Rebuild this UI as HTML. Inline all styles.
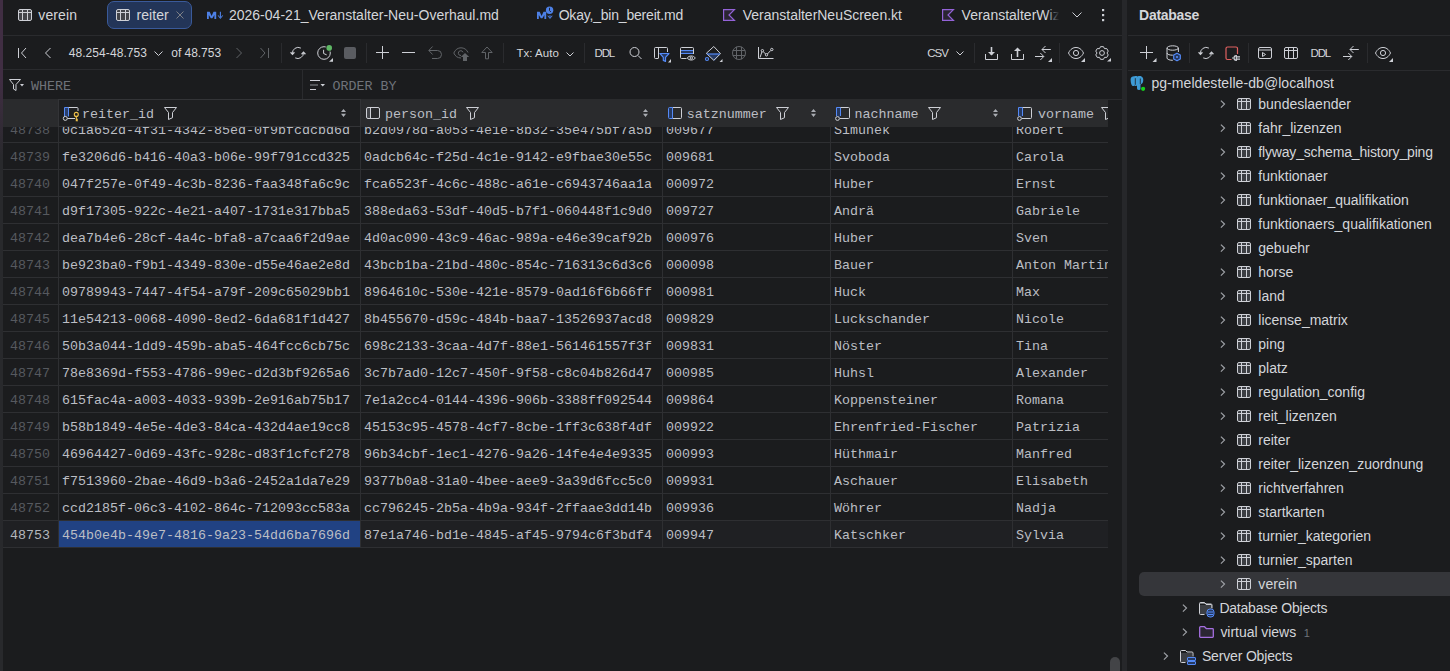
<!DOCTYPE html>
<html><head><meta charset="utf-8"><style>
html,body{margin:0;padding:0;width:1450px;height:671px;overflow:hidden;background:#1b1c1e}
.t{position:absolute;white-space:nowrap}
svg{display:block}
</style></head><body>
<div style="position:absolute;left:0px;top:0px;width:3px;height:671px;background:linear-gradient(180deg,#402e43 0px,#402e43 80px,#28292c 160px,#28292c 671px);"></div><svg style="position:absolute;left:18px;top:9px;overflow:visible" width="14" height="12" viewBox="0 0 14 12" fill="none" stroke="#ced0d6" stroke-width="1" ><rect x="1" y="1" width="12" height="10" fill="#43454a" stroke="none"/><rect x="0.5" y="0.5" width="13" height="11" rx="1.5"/><path d="M0.5 3.5H13.5M4.5 0.5V11.5M9.5 0.5V11.5"/></svg><div class="t" style="left:38.30px;top:5px;font:normal 14px/20px 'Liberation Sans',sans-serif;color:#d4d6da;letter-spacing:0.111px;">verein</div><div style="position:absolute;left:107px;top:1px;width:85px;height:28px;box-sizing:border-box;border:1px solid #3a5a9a;border-radius:7px;background:#233558"></div><svg style="position:absolute;left:116px;top:9px;overflow:visible" width="14" height="12" viewBox="0 0 14 12" fill="none" stroke="#ced0d6" stroke-width="1" ><rect x="1" y="1" width="12" height="10" fill="#43454a" stroke="none"/><rect x="0.5" y="0.5" width="13" height="11" rx="1.5"/><path d="M0.5 3.5H13.5M4.5 0.5V11.5M9.5 0.5V11.5"/></svg><div class="t" style="left:136.40px;top:5px;font:normal 14px/20px 'Liberation Sans',sans-serif;color:#d4d6da;letter-spacing:0.073px;">reiter</div><svg style="position:absolute;left:176px;top:11px;overflow:visible" width="8" height="8" viewBox="0 0 8 8" fill="none"  stroke-width="1" stroke="#7c7f86"><path d="M0.5 0.5L7.5 7.5M7.5 0.5L0.5 7.5"/></svg><svg style="position:absolute;left:207px;top:11px;overflow:visible" width="17" height="9" viewBox="0 0 17 9" fill="none" stroke="#ced0d6" stroke-width="1" ><path d="M0 8V0.7H2.7L4.6 4.9L6.5 0.7H9.2V8H7.4V3.9L5.4 7.3H3.8L1.8 3.9V8Z" fill="#4d80e6" stroke="none"/><path d="M13.4 0.7V6.5" stroke="#4d80e6" stroke-width="1.1"/><path d="M10.6 4.6L13.4 8L16.2 4.6L15.4 4.2L13.4 6.6L11.4 4.2Z" fill="#4d80e6" stroke="none"/></svg><div class="t" style="left:228.90px;top:5px;font:normal 14px/20px 'Liberation Sans',sans-serif;color:#d4d6da;letter-spacing:0.019px;">2026-04-21_Veranstalter-Neu-Overhaul.md</div><svg style="position:absolute;left:537px;top:6px;overflow:visible" width="17" height="14" viewBox="0 0 17 14" fill="none" stroke="#ced0d6" stroke-width="1" ><path d="M0 13V5.7H2.7L4.6 9.9L6.5 5.7H9.2V13H7.4V8.9L5.4 12.3H3.8L1.8 8.9V13Z" fill="#4d80e6" stroke="none"/><circle cx="12.6" cy="4.3" r="3.7" fill="#4d80e6" stroke="none"/><path d="M12.5 1.8V4.6L13.9 6" stroke="#1b1c1e" stroke-width="0.9"/><path d="M10.3 9.8L13 13L15.7 9.8L14.9 9.4L13 11.6L11.1 9.4Z" fill="#4d80e6" stroke="none"/><path d="M13 9.2V11" stroke="#4d80e6" stroke-width="1"/></svg><div class="t" style="left:558.70px;top:5px;font:normal 14px/20px 'Liberation Sans',sans-serif;color:#d4d6da;letter-spacing:-0.203px;">Okay,_bin_bereit.md</div><svg style="position:absolute;left:723px;top:9px;overflow:visible" width="13" height="13" viewBox="0 0 13 13" fill="none" stroke="#ced0d6" stroke-width="1" ><path d="M0.6 0.6H11.4L6 6L11.4 11.4H0.6Z" fill="#2a2532" stroke="#9463d8" stroke-width="1.2" stroke-linejoin="miter"/></svg><div class="t" style="left:742.80px;top:5px;font:normal 14px/20px 'Liberation Sans',sans-serif;color:#d4d6da;letter-spacing:-0.019px;">VeranstalterNeuScreen.kt</div><svg style="position:absolute;left:942px;top:9px;overflow:visible" width="13" height="13" viewBox="0 0 13 13" fill="none" stroke="#ced0d6" stroke-width="1" ><path d="M0.6 0.6H11.4L6 6L11.4 11.4H0.6Z" fill="#2a2532" stroke="#9463d8" stroke-width="1.2" stroke-linejoin="miter"/></svg><div class="t" style="left:961.60px;top:5px;font:normal 14px/20px 'Liberation Sans',sans-serif;color:#d4d6da;">VeranstalterWiz</div><div style="position:absolute;left:1046px;top:0;width:14px;height:34px;background:linear-gradient(90deg,rgba(27,28,30,0),#1b1c1e 95%)"></div><svg style="position:absolute;left:1072px;top:12px;overflow:visible" width="10" height="6" viewBox="0 0 10 6" fill="none" stroke="#ced0d6" stroke-width="1" ><path d="M0.5 0.5L5 5L9.5 0.5"/></svg><svg style="position:absolute;left:1102px;top:9px;overflow:visible" width="3" height="13" viewBox="0 0 3 13" fill="none" stroke="#ced0d6" stroke-width="1" ><rect x="0" y="0" width="2.2" height="2.2" fill="#ced0d6" stroke="none"/><rect x="0" y="5" width="2.2" height="2.2" fill="#ced0d6" stroke="none"/><rect x="0" y="10" width="2.2" height="2.2" fill="#ced0d6" stroke="none"/></svg><div style="position:absolute;left:3px;top:35px;width:1119px;height:1px;background:#2a2b2e;"></div><svg style="position:absolute;left:17px;top:47px;overflow:visible" width="12" height="12" viewBox="0 0 12 12" fill="none" stroke="#ced0d6" stroke-width="1" ><path d="M1.5 1V11M9 1L4.5 6L9 11"/></svg><svg style="position:absolute;left:44px;top:47px;overflow:visible" width="8" height="12" viewBox="0 0 8 12" fill="none" stroke="#ced0d6" stroke-width="1" ><path d="M6.5 1L1.5 6L6.5 11"/></svg><div class="t" style="left:68.70px;top:45px;font:normal 12px/17px 'Liberation Sans',sans-serif;color:#d4d6da;letter-spacing:0.073px;">48.254-48.753</div><svg style="position:absolute;left:154px;top:51px;overflow:visible" width="9" height="6" viewBox="0 0 9 6" fill="none" stroke="#ced0d6" stroke-width="1" ><path d="M0.5 0.5L4.5 4.5L8.5 0.5"/></svg><div class="t" style="left:171.30px;top:45px;font:normal 12px/17px 'Liberation Sans',sans-serif;color:#d4d6da;letter-spacing:-0.034px;">of 48.753</div><svg style="position:absolute;left:235px;top:47px;overflow:visible" width="8" height="12" viewBox="0 0 8 12" fill="none"  stroke-width="1" stroke="#616468"><path d="M1.5 1L6.5 6L1.5 11"/></svg><svg style="position:absolute;left:259px;top:47px;overflow:visible" width="12" height="12" viewBox="0 0 12 12" fill="none"  stroke-width="1" stroke="#616468"><path d="M1.5 1L6 6L1.5 11M9.5 1V11"/></svg><div style="position:absolute;left:281px;top:43px;width:1px;height:20px;background:#2a2b2e;"></div><svg style="position:absolute;left:290px;top:46px;overflow:visible" width="17" height="14" viewBox="0 0 17 14" fill="none" stroke="#ced0d6" stroke-width="1" ><path d="M10.9 2.1A5.7 5.7 0 0 0 2.5 8M5.2 11.9A5.7 5.7 0 0 0 13.5 6.5"/><path d="M0.6 6.3L2.5 8.4L4.4 6.3M11.6 8.2L13.5 6.1L15.4 8.2" stroke-width="1.3"/></svg><svg style="position:absolute;left:317px;top:46px;overflow:visible" width="17" height="17" viewBox="0 0 17 17" fill="none" stroke="#ced0d6" stroke-width="1" ><circle cx="7" cy="7" r="6.3"/><path d="M6.6 4.2V7.5L9.3 8.7" stroke-linecap="round"/><circle cx="12.2" cy="1.9" r="3.6" fill="#1b1c1e" stroke="none"/><circle cx="12.2" cy="1.9" r="2.8" fill="#5fb865" stroke="none"/><path d="M16 12V15.8H12Z" fill="#ced0d6" stroke="none"/></svg><div style="position:absolute;left:344px;top:47px;width:12px;height:12px;background:#5a5c61;border-radius:2px"></div><div style="position:absolute;left:366px;top:43px;width:1px;height:20px;background:#2a2b2e;"></div><svg style="position:absolute;left:376px;top:46px;overflow:visible" width="13" height="13" viewBox="0 0 13 13" fill="none" stroke="#ced0d6" stroke-width="1" ><path d="M6.5 0V13M0 6.5H13"/></svg><svg style="position:absolute;left:402px;top:46px;overflow:visible" width="13" height="13" viewBox="0 0 13 13" fill="none" stroke="#ced0d6" stroke-width="1" ><path d="M0 6.5H13"/></svg><svg style="position:absolute;left:428px;top:46px;overflow:visible" width="15" height="14" viewBox="0 0 15 14" fill="none"  stroke-width="1" stroke="#616468"><path d="M4.6 0.5L0.8 4.5L4.6 8.5M1 4.5H9.5A4 4 0 0 1 9.5 12.5H4"/></svg><svg style="position:absolute;left:453px;top:46px;overflow:visible" width="17" height="16" viewBox="0 0 17 16" fill="none"  stroke-width="1" stroke="#616468"><path d="M8 12C4.5 12 2 10 0.8 7C2.3 3.5 5 1.8 8 1.8C11 1.8 13.8 3.5 15 6.5"/><path d="M8 9.5A2.4 2.4 0 1 1 10 6.3"/><path d="M12 7L16.2 11H14V15H10V11H7.8Z" fill="#616468" stroke="none"/></svg><svg style="position:absolute;left:481px;top:46px;overflow:visible" width="13" height="14" viewBox="0 0 13 14" fill="none"  stroke-width="1" stroke="#616468"><path d="M6 1L0.8 6.5H4.5V12.8H7.5V6.5H11.2Z" stroke-linejoin="miter"/></svg><div style="position:absolute;left:503px;top:43px;width:1px;height:20px;background:#2a2b2e;"></div><div class="t" style="left:516.40px;top:45px;font:normal 11.5px/16px 'Liberation Sans',sans-serif;color:#d4d6da;letter-spacing:0.039px;">Tx: Auto</div><svg style="position:absolute;left:566px;top:52px;overflow:visible" width="8" height="5" viewBox="0 0 8 5" fill="none" stroke="#ced0d6" stroke-width="1" ><path d="M0.5 0.5L4 4L7.5 0.5"/></svg><div style="position:absolute;left:584px;top:43px;width:1px;height:20px;background:#2a2b2e;"></div><div class="t" style="left:594.60px;top:45px;font:normal 11.5px/16px 'Liberation Sans',sans-serif;color:#d4d6da;letter-spacing:-1.255px;">DDL</div><svg style="position:absolute;left:629px;top:47px;overflow:visible" width="13" height="12" viewBox="0 0 13 12" fill="none" stroke="#ced0d6" stroke-width="1" ><circle cx="5.5" cy="5" r="4.5"/><path d="M9 8.5L12.5 12"/></svg><svg style="position:absolute;left:654px;top:47px;overflow:visible" width="17" height="16" viewBox="0 0 17 16" fill="none" stroke="#ced0d6" stroke-width="1" ><path d="M4 11.5H1.5A1 1 0 0 1 0.5 10.5V1.5A1 1 0 0 1 1.5 0.5H12.5A1 1 0 0 1 13.5 1.5V5"/><path d="M4.5 0.5V11.5"/><path d="M6 6.5H15L11.5 10.3V14.5L9.3 13.4V10.3Z" fill="#263a63" stroke="#548af7" stroke-width="1.2" stroke-linejoin="round"/><path d="M17 12V15.5H14Z" fill="#ced0d6" stroke="none"/></svg><svg style="position:absolute;left:680px;top:47px;overflow:visible" width="16" height="14" viewBox="0 0 16 14" fill="none" stroke="#ced0d6" stroke-width="1" ><path d="M6.5 11.5H1.5A1 1 0 0 1 0.5 10.5V1.5A1 1 0 0 1 1.5 0.5H12.5A1 1 0 0 1 13.5 1.5V7"/><rect x="1" y="3.5" width="12" height="3" fill="#263a63" stroke="none"/><path d="M1 3.5H13M1 6.5H13" stroke="#548af7"/><path d="M7.3 11C8.8 8.3 13.7 8.3 15.3 11C13.7 13.7 8.8 13.7 7.3 11Z"/><circle cx="11.3" cy="11" r="1.2"/></svg><svg style="position:absolute;left:705px;top:46px;overflow:visible" width="18" height="16" viewBox="0 0 18 16" fill="none" stroke="#ced0d6" stroke-width="1" ><path d="M2 8L9.3 15.3L15.2 8Z" fill="#263a63" stroke="none"/><path d="M8.8 0.5L15.5 7.7L8.8 14.3L1.3 7.3Z" stroke-linejoin="round"/><path d="M1.8 8H15" stroke="#548af7" stroke-width="1.2"/><circle cx="2" cy="13" r="1.5" stroke="#548af7" stroke-width="1.2"/><path d="M17.5 13V16H14.5Z" fill="#ced0d6" stroke="none"/></svg><svg style="position:absolute;left:732px;top:46px;overflow:visible" width="14" height="14" viewBox="0 0 14 14" fill="none"  stroke-width="1" stroke="#616468"><circle cx="7" cy="7" r="6.5"/><path d="M4.5 0.8V13.2M9.5 0.8V13.2M0.8 4.5H13.2M0.8 9.5H13.2"/></svg><svg style="position:absolute;left:758px;top:47px;overflow:visible" width="16" height="12" viewBox="0 0 16 12" fill="none" stroke="#ced0d6" stroke-width="1" ><path d="M0.5 0V11.5H15.5"/><path d="M2 10.5L3.9 4.9M5.2 4.6L7.6 7M9.4 7L12.8 3.4"/><circle cx="4.4" cy="3.7" r="1.2"/><circle cx="8.5" cy="7.8" r="1.2"/><circle cx="13.8" cy="2.5" r="1.2"/></svg><div class="t" style="left:927.30px;top:45px;font:normal 11.5px/16px 'Liberation Sans',sans-serif;color:#d4d6da;letter-spacing:-0.988px;">CSV</div><svg style="position:absolute;left:956px;top:51px;overflow:visible" width="8" height="5" viewBox="0 0 8 5" fill="none" stroke="#ced0d6" stroke-width="1" ><path d="M0.5 0.5L4 4L7.5 0.5"/></svg><div style="position:absolute;left:974px;top:43px;width:1px;height:20px;background:#2a2b2e;"></div><svg style="position:absolute;left:985px;top:47px;overflow:visible" width="13" height="13" viewBox="0 0 13 13" fill="none" stroke="#ced0d6" stroke-width="1" ><path d="M6.5 0V8" stroke-width="1.6"/><path d="M3 5L6.5 8.5L10 5Z" fill="#ced0d6" stroke="none"/><path d="M0.5 7V12.5H12.5V7"/></svg><svg style="position:absolute;left:1011px;top:47px;overflow:visible" width="13" height="13" viewBox="0 0 13 13" fill="none" stroke="#ced0d6" stroke-width="1" ><path d="M6.5 3V10" stroke-width="1.6"/><path d="M3 4L6.5 0.5L10 4Z" fill="#ced0d6" stroke="none"/><path d="M0.5 7V12.5H12.5V7"/></svg><svg style="position:absolute;left:1034px;top:45px;overflow:visible" width="18" height="17" viewBox="0 0 18 17" fill="none" stroke="#ced0d6" stroke-width="1" ><path d="M8 4.5H16.8M11.5 1L8 4.5L11.5 8M1 11.5H9.8M6.3 8L9.8 11.5L6.3 15"/><path d="M18 13V17H14Z" fill="#ced0d6" stroke="none"/></svg><div style="position:absolute;left:1059px;top:43px;width:1px;height:20px;background:#2a2b2e;"></div><svg style="position:absolute;left:1067px;top:46px;overflow:visible" width="18" height="17" viewBox="0 0 18 17" fill="none" stroke="#ced0d6" stroke-width="1" ><path d="M1.5 7C3.5 2.8 6.3 1.5 9 1.5C11.7 1.5 14.5 2.8 16.5 7C14.5 11.2 11.7 12.5 9 12.5C6.3 12.5 3.5 11.2 1.5 7Z"/><circle cx="9" cy="7" r="2.6"/><path d="M18 12V16H14Z" fill="#ced0d6" stroke="none"/></svg><svg style="position:absolute;left:1095px;top:46px;overflow:visible" width="17" height="17" viewBox="0 0 17 17" fill="none" stroke="#ced0d6" stroke-width="1" ><path d="M4.50 2.67L5.54 0.67L8.46 0.67L9.50 2.67L11.75 2.57L13.22 5.10L12.00 7.00L13.22 8.90L11.75 11.43L9.50 11.33L8.46 13.33L5.54 13.33L4.50 11.33L2.25 11.43L0.78 8.90L2.00 7.00L0.78 5.10L2.25 2.57Z" stroke-linejoin="round"/><circle cx="7" cy="7" r="2.4"/><path d="M16 12V15.5H12Z" fill="#ced0d6" stroke="none"/></svg><div style="position:absolute;left:3px;top:69px;width:1119px;height:1px;background:#2a2b2e;"></div><svg style="position:absolute;left:9px;top:79px;overflow:visible" width="16" height="13" viewBox="0 0 16 13" fill="none" stroke="#ced0d6" stroke-width="1" ><path d="M0.5 0.5H11.5L7 5.5V11.5L4.5 10V5.5Z" stroke-linejoin="round"/><path d="M11 5H15L13 7.5Z" fill="#ced0d6" stroke="none"/></svg><div class="t" style="left:31.00px;top:77px;font:normal 13.33px/19px 'Liberation Mono',sans-serif;color:#6f737a;">WHERE</div><div style="position:absolute;left:302px;top:70px;width:1px;height:29px;background:#2a2b2e;"></div><svg style="position:absolute;left:310px;top:80px;overflow:visible" width="16" height="11" viewBox="0 0 16 11" fill="none" stroke="#ced0d6" stroke-width="1" ><path d="M0 0.5H10" stroke="#ced0d6"/><path d="M0 5H8" stroke="#8a8d92"/><path d="M0 9.5H6" stroke="#ced0d6"/><path d="M10.5 4H15L12.75 6.5Z" fill="#ced0d6" stroke="none"/></svg><div class="t" style="left:332.60px;top:77px;font:normal 13.33px/19px 'Liberation Mono',sans-serif;color:#6f737a;">ORDER BY</div><div style="position:absolute;left:3px;top:99px;width:1105px;height:28px;background:#2a2b2d;"></div><div style="position:absolute;left:58px;top:99px;width:303px;height:28px;background:#1e1f21;box-sizing:border-box;border:1px solid #333437"></div><div style="position:absolute;left:3px;top:142px;width:1105px;height:1px;background:#2e2f32;"></div><div style="position:absolute;left:3px;top:169px;width:1105px;height:1px;background:#2e2f32;"></div><div style="position:absolute;left:3px;top:196px;width:1105px;height:1px;background:#2e2f32;"></div><div style="position:absolute;left:3px;top:223px;width:1105px;height:1px;background:#2e2f32;"></div><div style="position:absolute;left:3px;top:250px;width:1105px;height:1px;background:#2e2f32;"></div><div style="position:absolute;left:3px;top:277px;width:1105px;height:1px;background:#2e2f32;"></div><div style="position:absolute;left:3px;top:304px;width:1105px;height:1px;background:#2e2f32;"></div><div style="position:absolute;left:3px;top:331px;width:1105px;height:1px;background:#2e2f32;"></div><div style="position:absolute;left:3px;top:358px;width:1105px;height:1px;background:#2e2f32;"></div><div style="position:absolute;left:3px;top:385px;width:1105px;height:1px;background:#2e2f32;"></div><div style="position:absolute;left:3px;top:412px;width:1105px;height:1px;background:#2e2f32;"></div><div style="position:absolute;left:3px;top:439px;width:1105px;height:1px;background:#2e2f32;"></div><div style="position:absolute;left:3px;top:466px;width:1105px;height:1px;background:#2e2f32;"></div><div style="position:absolute;left:3px;top:493px;width:1105px;height:1px;background:#2e2f32;"></div><div style="position:absolute;left:3px;top:520px;width:1105px;height:1px;background:#2e2f32;"></div><div style="position:absolute;left:3px;top:521px;width:1105px;height:26px;background:#1f2023;"></div><div style="position:absolute;left:59px;top:521px;width:301px;height:26px;background:#214283;"></div><div style="position:absolute;left:3px;top:547px;width:1105px;height:1px;background:#2e2f32;"></div><div style="position:absolute;left:0;top:127px;width:1108px;height:544px;overflow:hidden"><div style="position:absolute;left:0;top:-127px;width:1108px;height:671px"><div class="t" style="left:10.00px;top:121px;font:normal 13.33px/19px 'Liberation Mono',sans-serif;color:#56595f;">48738</div><div class="t" style="left:62.00px;top:121px;font:normal 13.33px/19px 'Liberation Mono',sans-serif;color:#bcbec4;">0c1a652d-4f31-4342-85ed-0f9bfcdcbd6d</div><div class="t" style="left:364.00px;top:121px;font:normal 13.33px/19px 'Liberation Mono',sans-serif;color:#bcbec4;">b2d0978d-a053-4e1e-8b32-35e475bf7a5b</div><div class="t" style="left:666.00px;top:121px;font:normal 13.33px/19px 'Liberation Mono',sans-serif;color:#bcbec4;">009677</div><div class="t" style="left:834.00px;top:121px;font:normal 13.33px/19px 'Liberation Mono',sans-serif;color:#bcbec4;">Simunek</div><div class="t" style="left:1016.00px;top:121px;font:normal 13.33px/19px 'Liberation Mono',sans-serif;color:#bcbec4;">Robert</div><div class="t" style="left:10.00px;top:148px;font:normal 13.33px/19px 'Liberation Mono',sans-serif;color:#56595f;">48739</div><div class="t" style="left:62.00px;top:148px;font:normal 13.33px/19px 'Liberation Mono',sans-serif;color:#bcbec4;">fe3206d6-b416-40a3-b06e-99f791ccd325</div><div class="t" style="left:364.00px;top:148px;font:normal 13.33px/19px 'Liberation Mono',sans-serif;color:#bcbec4;">0adcb64c-f25d-4c1e-9142-e9fbae30e55c</div><div class="t" style="left:666.00px;top:148px;font:normal 13.33px/19px 'Liberation Mono',sans-serif;color:#bcbec4;">009681</div><div class="t" style="left:834.00px;top:148px;font:normal 13.33px/19px 'Liberation Mono',sans-serif;color:#bcbec4;">Svoboda</div><div class="t" style="left:1016.00px;top:148px;font:normal 13.33px/19px 'Liberation Mono',sans-serif;color:#bcbec4;">Carola</div><div class="t" style="left:10.00px;top:175px;font:normal 13.33px/19px 'Liberation Mono',sans-serif;color:#56595f;">48740</div><div class="t" style="left:62.00px;top:175px;font:normal 13.33px/19px 'Liberation Mono',sans-serif;color:#bcbec4;">047f257e-0f49-4c3b-8236-faa348fa6c9c</div><div class="t" style="left:364.00px;top:175px;font:normal 13.33px/19px 'Liberation Mono',sans-serif;color:#bcbec4;">fca6523f-4c6c-488c-a61e-c6943746aa1a</div><div class="t" style="left:666.00px;top:175px;font:normal 13.33px/19px 'Liberation Mono',sans-serif;color:#bcbec4;">000972</div><div class="t" style="left:834.00px;top:175px;font:normal 13.33px/19px 'Liberation Mono',sans-serif;color:#bcbec4;">Huber</div><div class="t" style="left:1016.00px;top:175px;font:normal 13.33px/19px 'Liberation Mono',sans-serif;color:#bcbec4;">Ernst</div><div class="t" style="left:10.00px;top:202px;font:normal 13.33px/19px 'Liberation Mono',sans-serif;color:#56595f;">48741</div><div class="t" style="left:62.00px;top:202px;font:normal 13.33px/19px 'Liberation Mono',sans-serif;color:#bcbec4;">d9f17305-922c-4e21-a407-1731e317bba5</div><div class="t" style="left:364.00px;top:202px;font:normal 13.33px/19px 'Liberation Mono',sans-serif;color:#bcbec4;">388eda63-53df-40d5-b7f1-060448f1c9d0</div><div class="t" style="left:666.00px;top:202px;font:normal 13.33px/19px 'Liberation Mono',sans-serif;color:#bcbec4;">009727</div><div class="t" style="left:834.00px;top:202px;font:normal 13.33px/19px 'Liberation Mono',sans-serif;color:#bcbec4;">Andrä</div><div class="t" style="left:1016.00px;top:202px;font:normal 13.33px/19px 'Liberation Mono',sans-serif;color:#bcbec4;">Gabriele</div><div class="t" style="left:10.00px;top:229px;font:normal 13.33px/19px 'Liberation Mono',sans-serif;color:#56595f;">48742</div><div class="t" style="left:62.00px;top:229px;font:normal 13.33px/19px 'Liberation Mono',sans-serif;color:#bcbec4;">dea7b4e6-28cf-4a4c-bfa8-a7caa6f2d9ae</div><div class="t" style="left:364.00px;top:229px;font:normal 13.33px/19px 'Liberation Mono',sans-serif;color:#bcbec4;">4d0ac090-43c9-46ac-989a-e46e39caf92b</div><div class="t" style="left:666.00px;top:229px;font:normal 13.33px/19px 'Liberation Mono',sans-serif;color:#bcbec4;">000976</div><div class="t" style="left:834.00px;top:229px;font:normal 13.33px/19px 'Liberation Mono',sans-serif;color:#bcbec4;">Huber</div><div class="t" style="left:1016.00px;top:229px;font:normal 13.33px/19px 'Liberation Mono',sans-serif;color:#bcbec4;">Sven</div><div class="t" style="left:10.00px;top:256px;font:normal 13.33px/19px 'Liberation Mono',sans-serif;color:#56595f;">48743</div><div class="t" style="left:62.00px;top:256px;font:normal 13.33px/19px 'Liberation Mono',sans-serif;color:#bcbec4;">be923ba0-f9b1-4349-830e-d55e46ae2e8d</div><div class="t" style="left:364.00px;top:256px;font:normal 13.33px/19px 'Liberation Mono',sans-serif;color:#bcbec4;">43bcb1ba-21bd-480c-854c-716313c6d3c6</div><div class="t" style="left:666.00px;top:256px;font:normal 13.33px/19px 'Liberation Mono',sans-serif;color:#bcbec4;">000098</div><div class="t" style="left:834.00px;top:256px;font:normal 13.33px/19px 'Liberation Mono',sans-serif;color:#bcbec4;">Bauer</div><div class="t" style="left:1016.00px;top:256px;font:normal 13.33px/19px 'Liberation Mono',sans-serif;color:#bcbec4;">Anton Martin</div><div class="t" style="left:10.00px;top:283px;font:normal 13.33px/19px 'Liberation Mono',sans-serif;color:#56595f;">48744</div><div class="t" style="left:62.00px;top:283px;font:normal 13.33px/19px 'Liberation Mono',sans-serif;color:#bcbec4;">09789943-7447-4f54-a79f-209c65029bb1</div><div class="t" style="left:364.00px;top:283px;font:normal 13.33px/19px 'Liberation Mono',sans-serif;color:#bcbec4;">8964610c-530e-421e-8579-0ad16f6b66ff</div><div class="t" style="left:666.00px;top:283px;font:normal 13.33px/19px 'Liberation Mono',sans-serif;color:#bcbec4;">000981</div><div class="t" style="left:834.00px;top:283px;font:normal 13.33px/19px 'Liberation Mono',sans-serif;color:#bcbec4;">Huck</div><div class="t" style="left:1016.00px;top:283px;font:normal 13.33px/19px 'Liberation Mono',sans-serif;color:#bcbec4;">Max</div><div class="t" style="left:10.00px;top:310px;font:normal 13.33px/19px 'Liberation Mono',sans-serif;color:#56595f;">48745</div><div class="t" style="left:62.00px;top:310px;font:normal 13.33px/19px 'Liberation Mono',sans-serif;color:#bcbec4;">11e54213-0068-4090-8ed2-6da681f1d427</div><div class="t" style="left:364.00px;top:310px;font:normal 13.33px/19px 'Liberation Mono',sans-serif;color:#bcbec4;">8b455670-d59c-484b-baa7-13526937acd8</div><div class="t" style="left:666.00px;top:310px;font:normal 13.33px/19px 'Liberation Mono',sans-serif;color:#bcbec4;">009829</div><div class="t" style="left:834.00px;top:310px;font:normal 13.33px/19px 'Liberation Mono',sans-serif;color:#bcbec4;">Luckschander</div><div class="t" style="left:1016.00px;top:310px;font:normal 13.33px/19px 'Liberation Mono',sans-serif;color:#bcbec4;">Nicole</div><div class="t" style="left:10.00px;top:337px;font:normal 13.33px/19px 'Liberation Mono',sans-serif;color:#56595f;">48746</div><div class="t" style="left:62.00px;top:337px;font:normal 13.33px/19px 'Liberation Mono',sans-serif;color:#bcbec4;">50b3a044-1dd9-459b-aba5-464fcc6cb75c</div><div class="t" style="left:364.00px;top:337px;font:normal 13.33px/19px 'Liberation Mono',sans-serif;color:#bcbec4;">698c2133-3caa-4d7f-88e1-561461557f3f</div><div class="t" style="left:666.00px;top:337px;font:normal 13.33px/19px 'Liberation Mono',sans-serif;color:#bcbec4;">009831</div><div class="t" style="left:834.00px;top:337px;font:normal 13.33px/19px 'Liberation Mono',sans-serif;color:#bcbec4;">Nöster</div><div class="t" style="left:1016.00px;top:337px;font:normal 13.33px/19px 'Liberation Mono',sans-serif;color:#bcbec4;">Tina</div><div class="t" style="left:10.00px;top:364px;font:normal 13.33px/19px 'Liberation Mono',sans-serif;color:#56595f;">48747</div><div class="t" style="left:62.00px;top:364px;font:normal 13.33px/19px 'Liberation Mono',sans-serif;color:#bcbec4;">78e8369d-f553-4786-99ec-d2d3bf9265a6</div><div class="t" style="left:364.00px;top:364px;font:normal 13.33px/19px 'Liberation Mono',sans-serif;color:#bcbec4;">3c7b7ad0-12c7-450f-9f58-c8c04b826d47</div><div class="t" style="left:666.00px;top:364px;font:normal 13.33px/19px 'Liberation Mono',sans-serif;color:#bcbec4;">000985</div><div class="t" style="left:834.00px;top:364px;font:normal 13.33px/19px 'Liberation Mono',sans-serif;color:#bcbec4;">Huhsl</div><div class="t" style="left:1016.00px;top:364px;font:normal 13.33px/19px 'Liberation Mono',sans-serif;color:#bcbec4;">Alexander</div><div class="t" style="left:10.00px;top:391px;font:normal 13.33px/19px 'Liberation Mono',sans-serif;color:#56595f;">48748</div><div class="t" style="left:62.00px;top:391px;font:normal 13.33px/19px 'Liberation Mono',sans-serif;color:#bcbec4;">615fac4a-a003-4033-939b-2e916ab75b17</div><div class="t" style="left:364.00px;top:391px;font:normal 13.33px/19px 'Liberation Mono',sans-serif;color:#bcbec4;">7e1a2cc4-0144-4396-906b-3388ff092544</div><div class="t" style="left:666.00px;top:391px;font:normal 13.33px/19px 'Liberation Mono',sans-serif;color:#bcbec4;">009864</div><div class="t" style="left:834.00px;top:391px;font:normal 13.33px/19px 'Liberation Mono',sans-serif;color:#bcbec4;">Koppensteiner</div><div class="t" style="left:1016.00px;top:391px;font:normal 13.33px/19px 'Liberation Mono',sans-serif;color:#bcbec4;">Romana</div><div class="t" style="left:10.00px;top:418px;font:normal 13.33px/19px 'Liberation Mono',sans-serif;color:#56595f;">48749</div><div class="t" style="left:62.00px;top:418px;font:normal 13.33px/19px 'Liberation Mono',sans-serif;color:#bcbec4;">b58b1849-4e5e-4de3-84ca-432d4ae19cc8</div><div class="t" style="left:364.00px;top:418px;font:normal 13.33px/19px 'Liberation Mono',sans-serif;color:#bcbec4;">45153c95-4578-4cf7-8cbe-1ff3c638f4df</div><div class="t" style="left:666.00px;top:418px;font:normal 13.33px/19px 'Liberation Mono',sans-serif;color:#bcbec4;">009922</div><div class="t" style="left:834.00px;top:418px;font:normal 13.33px/19px 'Liberation Mono',sans-serif;color:#bcbec4;">Ehrenfried-Fischer</div><div class="t" style="left:1016.00px;top:418px;font:normal 13.33px/19px 'Liberation Mono',sans-serif;color:#bcbec4;">Patrizia</div><div class="t" style="left:10.00px;top:445px;font:normal 13.33px/19px 'Liberation Mono',sans-serif;color:#56595f;">48750</div><div class="t" style="left:62.00px;top:445px;font:normal 13.33px/19px 'Liberation Mono',sans-serif;color:#bcbec4;">46964427-0d69-43fc-928c-d83f1cfcf278</div><div class="t" style="left:364.00px;top:445px;font:normal 13.33px/19px 'Liberation Mono',sans-serif;color:#bcbec4;">96b34cbf-1ec1-4276-9a26-14fe4e4e9335</div><div class="t" style="left:666.00px;top:445px;font:normal 13.33px/19px 'Liberation Mono',sans-serif;color:#bcbec4;">000993</div><div class="t" style="left:834.00px;top:445px;font:normal 13.33px/19px 'Liberation Mono',sans-serif;color:#bcbec4;">Hüthmair</div><div class="t" style="left:1016.00px;top:445px;font:normal 13.33px/19px 'Liberation Mono',sans-serif;color:#bcbec4;">Manfred</div><div class="t" style="left:10.00px;top:472px;font:normal 13.33px/19px 'Liberation Mono',sans-serif;color:#56595f;">48751</div><div class="t" style="left:62.00px;top:472px;font:normal 13.33px/19px 'Liberation Mono',sans-serif;color:#bcbec4;">f7513960-2bae-46d9-b3a6-2452a1da7e29</div><div class="t" style="left:364.00px;top:472px;font:normal 13.33px/19px 'Liberation Mono',sans-serif;color:#bcbec4;">9377b0a8-31a0-4bee-aee9-3a39d6fcc5c0</div><div class="t" style="left:666.00px;top:472px;font:normal 13.33px/19px 'Liberation Mono',sans-serif;color:#bcbec4;">009931</div><div class="t" style="left:834.00px;top:472px;font:normal 13.33px/19px 'Liberation Mono',sans-serif;color:#bcbec4;">Aschauer</div><div class="t" style="left:1016.00px;top:472px;font:normal 13.33px/19px 'Liberation Mono',sans-serif;color:#bcbec4;">Elisabeth</div><div class="t" style="left:10.00px;top:499px;font:normal 13.33px/19px 'Liberation Mono',sans-serif;color:#56595f;">48752</div><div class="t" style="left:62.00px;top:499px;font:normal 13.33px/19px 'Liberation Mono',sans-serif;color:#bcbec4;">ccd2185f-06c3-4102-864c-712093cc583a</div><div class="t" style="left:364.00px;top:499px;font:normal 13.33px/19px 'Liberation Mono',sans-serif;color:#bcbec4;">cc796245-2b5a-4b9a-934f-2ffaae3dd14b</div><div class="t" style="left:666.00px;top:499px;font:normal 13.33px/19px 'Liberation Mono',sans-serif;color:#bcbec4;">009936</div><div class="t" style="left:834.00px;top:499px;font:normal 13.33px/19px 'Liberation Mono',sans-serif;color:#bcbec4;">Wöhrer</div><div class="t" style="left:1016.00px;top:499px;font:normal 13.33px/19px 'Liberation Mono',sans-serif;color:#bcbec4;">Nadja</div><div class="t" style="left:10.00px;top:526px;font:normal 13.33px/19px 'Liberation Mono',sans-serif;color:#b4b7bd;">48753</div><div class="t" style="left:62.00px;top:526px;font:normal 13.33px/19px 'Liberation Mono',sans-serif;color:#bcbec4;">454b0e4b-49e7-4816-9a23-54dd6ba7696d</div><div class="t" style="left:364.00px;top:526px;font:normal 13.33px/19px 'Liberation Mono',sans-serif;color:#bcbec4;">87e1a746-bd1e-4845-af45-9794c6f3bdf4</div><div class="t" style="left:666.00px;top:526px;font:normal 13.33px/19px 'Liberation Mono',sans-serif;color:#bcbec4;">009947</div><div class="t" style="left:834.00px;top:526px;font:normal 13.33px/19px 'Liberation Mono',sans-serif;color:#bcbec4;">Katschker</div><div class="t" style="left:1016.00px;top:526px;font:normal 13.33px/19px 'Liberation Mono',sans-serif;color:#bcbec4;">Sylvia</div></div></div><div style="position:absolute;left:58px;top:127px;width:1px;height:421px;background:#2e2f32;"></div><div style="position:absolute;left:360px;top:127px;width:1px;height:421px;background:#2e2f32;"></div><div style="position:absolute;left:662px;top:127px;width:1px;height:421px;background:#2e2f32;"></div><div style="position:absolute;left:830px;top:127px;width:1px;height:421px;background:#2e2f32;"></div><div style="position:absolute;left:1012px;top:127px;width:1px;height:421px;background:#2e2f32;"></div><svg style="position:absolute;left:62px;top:106px;overflow:visible" width="18" height="16" viewBox="0 0 18 16" fill="none" stroke="#ced0d6" stroke-width="1" ><rect x="3" y="2" width="3" height="8.5" fill="#2a3f6b" stroke="none"/><path d="M2.5 10.5V1.5H6.5V10.5" stroke="#548af7"/><path d="M6.5 1.5H15A1 1 0 0 1 16 2.5V5"/><path d="M5.5 12.5H13"/><circle cx="3.3" cy="12.4" r="2"/><circle cx="14.3" cy="8.4" r="2" stroke="#f0c24a" stroke-width="1.1"/><path d="M14.3 10.4V15.2M14.3 13.2H16M14.3 14.8H16" stroke="#f0c24a" stroke-width="1.1"/></svg><div class="t" style="left:82.00px;top:105px;font:normal 13.33px/19px 'Liberation Mono',sans-serif;color:#bcbec4;">reiter_id</div><svg style="position:absolute;left:164px;top:107px;overflow:visible" width="13" height="13" viewBox="0 0 13 13" fill="none" stroke="#ced0d6" stroke-width="1" ><path d="M0.5 0.5H12.5L8.5 5.5V10.7L4.5 12.5V5.5Z" stroke-linejoin="miter"/></svg><svg style="position:absolute;left:340.5px;top:109px;overflow:visible" width="5" height="8" viewBox="0 0 5 8" fill="none" stroke="#ced0d6" stroke-width="1" ><path d="M0 3L2.5 0L5 3Z M0 4.8L2.5 8L5 4.8Z" fill="#a9acb2" stroke="none"/></svg><svg style="position:absolute;left:366px;top:107px;overflow:visible" width="14" height="12" viewBox="0 0 14 12" fill="none" stroke="#ced0d6" stroke-width="1" ><rect x="1" y="1" width="3" height="10" fill="#43454a" stroke="none"/><rect x="0.5" y="0.5" width="13" height="11" rx="1.5"/><path d="M4.5 0.5V11.5"/></svg><div class="t" style="left:385.00px;top:105px;font:normal 13.33px/19px 'Liberation Mono',sans-serif;color:#bcbec4;">person_id</div><svg style="position:absolute;left:466px;top:107px;overflow:visible" width="13" height="13" viewBox="0 0 13 13" fill="none" stroke="#ced0d6" stroke-width="1" ><path d="M0.5 0.5H12.5L8.5 5.5V10.7L4.5 12.5V5.5Z" stroke-linejoin="miter"/></svg><svg style="position:absolute;left:642.5px;top:109px;overflow:visible" width="5" height="8" viewBox="0 0 5 8" fill="none" stroke="#ced0d6" stroke-width="1" ><path d="M0 3L2.5 0L5 3Z M0 4.8L2.5 8L5 4.8Z" fill="#a9acb2" stroke="none"/></svg><svg style="position:absolute;left:668px;top:107px;overflow:visible" width="14" height="12" viewBox="0 0 14 12" fill="none" stroke="#ced0d6" stroke-width="1" ><rect x="1" y="1" width="3" height="10" fill="#263a63" stroke="none"/><path d="M4.5 0.5H12.5A1 1 0 0 1 13.5 1.5V10.5A1 1 0 0 1 12.5 11.5H4.5"/><path d="M4.5 0.5H1.5A1 1 0 0 0 0.5 1.5V10.5A1 1 0 0 0 1.5 11.5H4.5V0.5" stroke="#548af7"/></svg><div class="t" style="left:686.70px;top:105px;font:normal 13.33px/19px 'Liberation Mono',sans-serif;color:#bcbec4;">satznummer</div><svg style="position:absolute;left:776px;top:107px;overflow:visible" width="13" height="13" viewBox="0 0 13 13" fill="none" stroke="#ced0d6" stroke-width="1" ><path d="M0.5 0.5H12.5L8.5 5.5V10.7L4.5 12.5V5.5Z" stroke-linejoin="miter"/></svg><svg style="position:absolute;left:810.5px;top:109px;overflow:visible" width="5" height="8" viewBox="0 0 5 8" fill="none" stroke="#ced0d6" stroke-width="1" ><path d="M0 3L2.5 0L5 3Z M0 4.8L2.5 8L5 4.8Z" fill="#a9acb2" stroke="none"/></svg><svg style="position:absolute;left:835px;top:107px;overflow:visible" width="15" height="15" viewBox="0 0 15 15" fill="none" stroke="#ced0d6" stroke-width="1" ><rect x="2" y="1" width="3" height="9" fill="#263a63" stroke="none"/><path d="M1.5 9V0.5H5.5V9" stroke="#548af7"/><path d="M5.5 0.5H13.5A1 1 0 0 1 14.5 1.5V10.5A1 1 0 0 1 13.5 11.5H5"/><circle cx="2.5" cy="11.5" r="1.9"/></svg><div class="t" style="left:854.50px;top:105px;font:normal 13.33px/19px 'Liberation Mono',sans-serif;color:#bcbec4;">nachname</div><svg style="position:absolute;left:928px;top:107px;overflow:visible" width="13" height="13" viewBox="0 0 13 13" fill="none" stroke="#ced0d6" stroke-width="1" ><path d="M0.5 0.5H12.5L8.5 5.5V10.7L4.5 12.5V5.5Z" stroke-linejoin="miter"/></svg><svg style="position:absolute;left:992.5px;top:109px;overflow:visible" width="5" height="8" viewBox="0 0 5 8" fill="none" stroke="#ced0d6" stroke-width="1" ><path d="M0 3L2.5 0L5 3Z M0 4.8L2.5 8L5 4.8Z" fill="#a9acb2" stroke="none"/></svg><svg style="position:absolute;left:1017px;top:107px;overflow:visible" width="15" height="15" viewBox="0 0 15 15" fill="none" stroke="#ced0d6" stroke-width="1" ><rect x="2" y="1" width="3" height="9" fill="#263a63" stroke="none"/><path d="M1.5 9V0.5H5.5V9" stroke="#548af7"/><path d="M5.5 0.5H13.5A1 1 0 0 1 14.5 1.5V10.5A1 1 0 0 1 13.5 11.5H5"/><circle cx="2.5" cy="11.5" r="1.9"/></svg><div class="t" style="left:1037.90px;top:105px;font:normal 13.33px/19px 'Liberation Mono',sans-serif;color:#bcbec4;">vorname</div><svg style="position:absolute;left:1101px;top:107px;overflow:visible" width="13" height="13" viewBox="0 0 13 13" fill="none" stroke="#ced0d6" stroke-width="1" ><path d="M0.5 0.5H12.5L8.5 5.5V10.7L4.5 12.5V5.5Z" stroke-linejoin="miter"/></svg><div style="position:absolute;left:1108px;top:99px;width:14px;height:572px;background:#1b1c1e;"></div><div style="position:absolute;left:1108px;top:99px;width:14px;height:1px;background:#2a2b2e;"></div><div style="position:absolute;left:1110px;top:657px;width:10px;height:20px;background:#434447;border-radius:5px"></div><div style="position:absolute;left:1122px;top:0px;width:5px;height:671px;background:#26272a;"></div><div class="t" style="left:1139.10px;top:5px;font:bold 14px/20px 'Liberation Sans',sans-serif;color:#d4d6da;letter-spacing:-0.296px;">Database</div><div style="position:absolute;left:1128px;top:35px;width:322px;height:1px;background:#2a2b2e;"></div><div style="position:absolute;left:1128px;top:70px;width:322px;height:1px;background:#2a2b2e;"></div><svg style="position:absolute;left:1140px;top:46px;overflow:visible" width="17" height="17" viewBox="0 0 17 17" fill="none" stroke="#ced0d6" stroke-width="1" ><path d="M6.5 0V13M0 6.5H13"/><path d="M16.5 12V16H12.5Z" fill="#ced0d6" stroke="none"/></svg><svg style="position:absolute;left:1166px;top:45px;overflow:visible" width="17" height="17" viewBox="0 0 17 17" fill="none" stroke="#ced0d6" stroke-width="1" ><ellipse cx="6.7" cy="3" rx="5.7" ry="2.2"/><path d="M1 3V13C1 14.5 4 15.3 6.8 15.3M1 8C1 9.5 4 10.2 6.8 10.2M12.4 3V7"/><path d="M11 8.2L14.3 10.1V13.9L11 15.8L7.7 13.9V10.1Z" fill="#22365e" stroke="#548af7" stroke-width="1.2" stroke-linejoin="round"/><circle cx="11" cy="12" r="1.1" fill="#548af7" stroke="none"/></svg><div style="position:absolute;left:1189px;top:43px;width:1px;height:20px;background:#2a2b2e;"></div><svg style="position:absolute;left:1198px;top:46px;overflow:visible" width="17" height="14" viewBox="0 0 17 14" fill="none" stroke="#ced0d6" stroke-width="1" ><path d="M10.9 2.1A5.7 5.7 0 0 0 2.5 8M5.2 11.9A5.7 5.7 0 0 0 13.5 6.5"/><path d="M0.6 6.3L2.5 8.4L4.4 6.3M11.6 8.2L13.5 6.1L15.4 8.2" stroke-width="1.3"/></svg><svg style="position:absolute;left:1225px;top:46px;overflow:visible" width="16" height="16" viewBox="0 0 16 16" fill="none" stroke="#ced0d6" stroke-width="1" ><path d="M6.5 13.5H2.5A1.5 1.5 0 0 1 1 12V2.5A1.5 1.5 0 0 1 2.5 1H11A1.5 1.5 0 0 1 12.5 2.5V8" stroke="#e06060" stroke-width="1.2"/><path d="M7 12H8.3M11.3 9.7A2.3 2.3 0 0 0 11.3 14.3Z" stroke-width="1.2"/><path d="M11.3 10.8H15M11.3 13.2H15" stroke-width="1.2"/></svg><div style="position:absolute;left:1248px;top:43px;width:1px;height:20px;background:#2a2b2e;"></div><svg style="position:absolute;left:1258px;top:47px;overflow:visible" width="14" height="12" viewBox="0 0 14 12" fill="none" stroke="#ced0d6" stroke-width="1" ><rect x="0.5" y="0.5" width="13" height="11" rx="1.5"/><path d="M0.5 3H13.5M4.5 5.5L7.5 7.5L4.5 9.5Z"/></svg><svg style="position:absolute;left:1284px;top:47px;overflow:visible" width="14" height="12" viewBox="0 0 14 12" fill="none" stroke="#ced0d6" stroke-width="1" ><rect x="0.5" y="0.5" width="13" height="11" rx="1.5"/><path d="M0.5 3.5H13.5M4.5 0.5V11.5M9.5 0.5V11.5"/></svg><div class="t" style="left:1310.50px;top:45px;font:normal 11.5px/16px 'Liberation Sans',sans-serif;color:#d4d6da;letter-spacing:-1.155px;">DDL</div><svg style="position:absolute;left:1342px;top:45px;overflow:visible" width="18" height="17" viewBox="0 0 18 17" fill="none" stroke="#ced0d6" stroke-width="1" ><path d="M8 4.5H16.8M11.5 1L8 4.5L11.5 8M1 11.5H9.8M6.3 8L9.8 11.5L6.3 15"/></svg><div style="position:absolute;left:1367px;top:43px;width:1px;height:20px;background:#2a2b2e;"></div><svg style="position:absolute;left:1374px;top:46px;overflow:visible" width="18" height="17" viewBox="0 0 18 17" fill="none" stroke="#ced0d6" stroke-width="1" ><path d="M1.5 7C3.5 2.8 6.3 1.5 9 1.5C11.7 1.5 14.5 2.8 16.5 7C14.5 11.2 11.7 12.5 9 12.5C6.3 12.5 3.5 11.2 1.5 7Z"/><circle cx="9" cy="7" r="2.6"/><path d="M19 12V16H15Z" fill="#ced0d6" stroke="none"/></svg><svg style="position:absolute;left:1130px;top:76px;overflow:visible" width="16" height="16" viewBox="0 0 16 16" fill="none" stroke="#ced0d6" stroke-width="1" ><path d="M0.6 3.2C0.6 1 2.5 0 4.5 0.2C5.5 0.1 6.5 0 7.5 0.5C9 -0.1 10.5 0 11.5 0.5C13 1.2 13.5 3 13.2 5C13 6.8 12 8.3 10.5 8.5V12.8C10.5 13.9 9.5 14 8.8 14C7.5 14 7 13 7 12V9.8C6 10 5 10 4.5 9.5C4 10.2 2.8 10.3 2 9.5C1 8.2 0.6 5.5 0.6 3.2Z" fill="#3e9bd6" stroke="none"/><path d="M5.3 2.2V8.8M10.3 2.5V8" stroke="#1c1d20" stroke-width="0.8"/><circle cx="13.1" cy="12.8" r="2.1" fill="#17d11c" stroke="none"/></svg><div class="t" style="left:1151.40px;top:73px;font:normal 14px/20px 'Liberation Sans',sans-serif;color:#d4d6da;letter-spacing:0.071px;">pg-meldestelle-db@localhost</div><svg style="position:absolute;left:1220px;top:100px;overflow:visible" width="6" height="9" viewBox="0 0 6 9" fill="none"  stroke-width="1" stroke="#9fa2a7"><path d="M0.9 0.6L4.5 4.1L0.9 7.6" stroke-width="1.2"/></svg><svg style="position:absolute;left:1237px;top:98px;overflow:visible" width="14" height="12" viewBox="0 0 14 12" fill="none" stroke="#ced0d6" stroke-width="1" ><rect x="1" y="1" width="12" height="10" fill="#3c3e43" stroke="none"/><rect x="0.5" y="0.5" width="13" height="11" rx="1.5"/><path d="M0.5 3.5H13.5M4.5 0.5V11.5M9.5 0.5V11.5"/></svg><div class="t" style="left:1258.30px;top:94px;font:normal 14px/20px 'Liberation Sans',sans-serif;color:#d4d6da;">bundeslaender</div><svg style="position:absolute;left:1220px;top:124px;overflow:visible" width="6" height="9" viewBox="0 0 6 9" fill="none"  stroke-width="1" stroke="#9fa2a7"><path d="M0.9 0.6L4.5 4.1L0.9 7.6" stroke-width="1.2"/></svg><svg style="position:absolute;left:1237px;top:122px;overflow:visible" width="14" height="12" viewBox="0 0 14 12" fill="none" stroke="#ced0d6" stroke-width="1" ><rect x="1" y="1" width="12" height="10" fill="#3c3e43" stroke="none"/><rect x="0.5" y="0.5" width="13" height="11" rx="1.5"/><path d="M0.5 3.5H13.5M4.5 0.5V11.5M9.5 0.5V11.5"/></svg><div class="t" style="left:1258.30px;top:118px;font:normal 14px/20px 'Liberation Sans',sans-serif;color:#d4d6da;">fahr_lizenzen</div><svg style="position:absolute;left:1220px;top:148px;overflow:visible" width="6" height="9" viewBox="0 0 6 9" fill="none"  stroke-width="1" stroke="#9fa2a7"><path d="M0.9 0.6L4.5 4.1L0.9 7.6" stroke-width="1.2"/></svg><svg style="position:absolute;left:1237px;top:146px;overflow:visible" width="14" height="12" viewBox="0 0 14 12" fill="none" stroke="#ced0d6" stroke-width="1" ><rect x="1" y="1" width="12" height="10" fill="#3c3e43" stroke="none"/><rect x="0.5" y="0.5" width="13" height="11" rx="1.5"/><path d="M0.5 3.5H13.5M4.5 0.5V11.5M9.5 0.5V11.5"/></svg><div class="t" style="left:1258.30px;top:142px;font:normal 14px/20px 'Liberation Sans',sans-serif;color:#d4d6da;letter-spacing:-0.172px;">flyway_schema_history_ping</div><svg style="position:absolute;left:1220px;top:172px;overflow:visible" width="6" height="9" viewBox="0 0 6 9" fill="none"  stroke-width="1" stroke="#9fa2a7"><path d="M0.9 0.6L4.5 4.1L0.9 7.6" stroke-width="1.2"/></svg><svg style="position:absolute;left:1237px;top:170px;overflow:visible" width="14" height="12" viewBox="0 0 14 12" fill="none" stroke="#ced0d6" stroke-width="1" ><rect x="1" y="1" width="12" height="10" fill="#3c3e43" stroke="none"/><rect x="0.5" y="0.5" width="13" height="11" rx="1.5"/><path d="M0.5 3.5H13.5M4.5 0.5V11.5M9.5 0.5V11.5"/></svg><div class="t" style="left:1258.30px;top:166px;font:normal 14px/20px 'Liberation Sans',sans-serif;color:#d4d6da;">funktionaer</div><svg style="position:absolute;left:1220px;top:196px;overflow:visible" width="6" height="9" viewBox="0 0 6 9" fill="none"  stroke-width="1" stroke="#9fa2a7"><path d="M0.9 0.6L4.5 4.1L0.9 7.6" stroke-width="1.2"/></svg><svg style="position:absolute;left:1237px;top:194px;overflow:visible" width="14" height="12" viewBox="0 0 14 12" fill="none" stroke="#ced0d6" stroke-width="1" ><rect x="1" y="1" width="12" height="10" fill="#3c3e43" stroke="none"/><rect x="0.5" y="0.5" width="13" height="11" rx="1.5"/><path d="M0.5 3.5H13.5M4.5 0.5V11.5M9.5 0.5V11.5"/></svg><div class="t" style="left:1258.30px;top:190px;font:normal 14px/20px 'Liberation Sans',sans-serif;color:#d4d6da;letter-spacing:-0.017px;">funktionaer_qualifikation</div><svg style="position:absolute;left:1220px;top:220px;overflow:visible" width="6" height="9" viewBox="0 0 6 9" fill="none"  stroke-width="1" stroke="#9fa2a7"><path d="M0.9 0.6L4.5 4.1L0.9 7.6" stroke-width="1.2"/></svg><svg style="position:absolute;left:1237px;top:218px;overflow:visible" width="14" height="12" viewBox="0 0 14 12" fill="none" stroke="#ced0d6" stroke-width="1" ><rect x="1" y="1" width="12" height="10" fill="#3c3e43" stroke="none"/><rect x="0.5" y="0.5" width="13" height="11" rx="1.5"/><path d="M0.5 3.5H13.5M4.5 0.5V11.5M9.5 0.5V11.5"/></svg><div class="t" style="left:1258.30px;top:214px;font:normal 14px/20px 'Liberation Sans',sans-serif;color:#d4d6da;">funktionaers_qualifikationen</div><svg style="position:absolute;left:1220px;top:244px;overflow:visible" width="6" height="9" viewBox="0 0 6 9" fill="none"  stroke-width="1" stroke="#9fa2a7"><path d="M0.9 0.6L4.5 4.1L0.9 7.6" stroke-width="1.2"/></svg><svg style="position:absolute;left:1237px;top:242px;overflow:visible" width="14" height="12" viewBox="0 0 14 12" fill="none" stroke="#ced0d6" stroke-width="1" ><rect x="1" y="1" width="12" height="10" fill="#3c3e43" stroke="none"/><rect x="0.5" y="0.5" width="13" height="11" rx="1.5"/><path d="M0.5 3.5H13.5M4.5 0.5V11.5M9.5 0.5V11.5"/></svg><div class="t" style="left:1258.30px;top:238px;font:normal 14px/20px 'Liberation Sans',sans-serif;color:#d4d6da;">gebuehr</div><svg style="position:absolute;left:1220px;top:268px;overflow:visible" width="6" height="9" viewBox="0 0 6 9" fill="none"  stroke-width="1" stroke="#9fa2a7"><path d="M0.9 0.6L4.5 4.1L0.9 7.6" stroke-width="1.2"/></svg><svg style="position:absolute;left:1237px;top:266px;overflow:visible" width="14" height="12" viewBox="0 0 14 12" fill="none" stroke="#ced0d6" stroke-width="1" ><rect x="1" y="1" width="12" height="10" fill="#3c3e43" stroke="none"/><rect x="0.5" y="0.5" width="13" height="11" rx="1.5"/><path d="M0.5 3.5H13.5M4.5 0.5V11.5M9.5 0.5V11.5"/></svg><div class="t" style="left:1258.30px;top:262px;font:normal 14px/20px 'Liberation Sans',sans-serif;color:#d4d6da;">horse</div><svg style="position:absolute;left:1220px;top:292px;overflow:visible" width="6" height="9" viewBox="0 0 6 9" fill="none"  stroke-width="1" stroke="#9fa2a7"><path d="M0.9 0.6L4.5 4.1L0.9 7.6" stroke-width="1.2"/></svg><svg style="position:absolute;left:1237px;top:290px;overflow:visible" width="14" height="12" viewBox="0 0 14 12" fill="none" stroke="#ced0d6" stroke-width="1" ><rect x="1" y="1" width="12" height="10" fill="#3c3e43" stroke="none"/><rect x="0.5" y="0.5" width="13" height="11" rx="1.5"/><path d="M0.5 3.5H13.5M4.5 0.5V11.5M9.5 0.5V11.5"/></svg><div class="t" style="left:1258.30px;top:286px;font:normal 14px/20px 'Liberation Sans',sans-serif;color:#d4d6da;">land</div><svg style="position:absolute;left:1220px;top:316px;overflow:visible" width="6" height="9" viewBox="0 0 6 9" fill="none"  stroke-width="1" stroke="#9fa2a7"><path d="M0.9 0.6L4.5 4.1L0.9 7.6" stroke-width="1.2"/></svg><svg style="position:absolute;left:1237px;top:314px;overflow:visible" width="14" height="12" viewBox="0 0 14 12" fill="none" stroke="#ced0d6" stroke-width="1" ><rect x="1" y="1" width="12" height="10" fill="#3c3e43" stroke="none"/><rect x="0.5" y="0.5" width="13" height="11" rx="1.5"/><path d="M0.5 3.5H13.5M4.5 0.5V11.5M9.5 0.5V11.5"/></svg><div class="t" style="left:1258.30px;top:310px;font:normal 14px/20px 'Liberation Sans',sans-serif;color:#d4d6da;">license_matrix</div><svg style="position:absolute;left:1220px;top:340px;overflow:visible" width="6" height="9" viewBox="0 0 6 9" fill="none"  stroke-width="1" stroke="#9fa2a7"><path d="M0.9 0.6L4.5 4.1L0.9 7.6" stroke-width="1.2"/></svg><svg style="position:absolute;left:1237px;top:338px;overflow:visible" width="14" height="12" viewBox="0 0 14 12" fill="none" stroke="#ced0d6" stroke-width="1" ><rect x="1" y="1" width="12" height="10" fill="#3c3e43" stroke="none"/><rect x="0.5" y="0.5" width="13" height="11" rx="1.5"/><path d="M0.5 3.5H13.5M4.5 0.5V11.5M9.5 0.5V11.5"/></svg><div class="t" style="left:1258.30px;top:334px;font:normal 14px/20px 'Liberation Sans',sans-serif;color:#d4d6da;">ping</div><svg style="position:absolute;left:1220px;top:364px;overflow:visible" width="6" height="9" viewBox="0 0 6 9" fill="none"  stroke-width="1" stroke="#9fa2a7"><path d="M0.9 0.6L4.5 4.1L0.9 7.6" stroke-width="1.2"/></svg><svg style="position:absolute;left:1237px;top:362px;overflow:visible" width="14" height="12" viewBox="0 0 14 12" fill="none" stroke="#ced0d6" stroke-width="1" ><rect x="1" y="1" width="12" height="10" fill="#3c3e43" stroke="none"/><rect x="0.5" y="0.5" width="13" height="11" rx="1.5"/><path d="M0.5 3.5H13.5M4.5 0.5V11.5M9.5 0.5V11.5"/></svg><div class="t" style="left:1258.30px;top:358px;font:normal 14px/20px 'Liberation Sans',sans-serif;color:#d4d6da;">platz</div><svg style="position:absolute;left:1220px;top:388px;overflow:visible" width="6" height="9" viewBox="0 0 6 9" fill="none"  stroke-width="1" stroke="#9fa2a7"><path d="M0.9 0.6L4.5 4.1L0.9 7.6" stroke-width="1.2"/></svg><svg style="position:absolute;left:1237px;top:386px;overflow:visible" width="14" height="12" viewBox="0 0 14 12" fill="none" stroke="#ced0d6" stroke-width="1" ><rect x="1" y="1" width="12" height="10" fill="#3c3e43" stroke="none"/><rect x="0.5" y="0.5" width="13" height="11" rx="1.5"/><path d="M0.5 3.5H13.5M4.5 0.5V11.5M9.5 0.5V11.5"/></svg><div class="t" style="left:1258.30px;top:382px;font:normal 14px/20px 'Liberation Sans',sans-serif;color:#d4d6da;">regulation_config</div><svg style="position:absolute;left:1220px;top:412px;overflow:visible" width="6" height="9" viewBox="0 0 6 9" fill="none"  stroke-width="1" stroke="#9fa2a7"><path d="M0.9 0.6L4.5 4.1L0.9 7.6" stroke-width="1.2"/></svg><svg style="position:absolute;left:1237px;top:410px;overflow:visible" width="14" height="12" viewBox="0 0 14 12" fill="none" stroke="#ced0d6" stroke-width="1" ><rect x="1" y="1" width="12" height="10" fill="#3c3e43" stroke="none"/><rect x="0.5" y="0.5" width="13" height="11" rx="1.5"/><path d="M0.5 3.5H13.5M4.5 0.5V11.5M9.5 0.5V11.5"/></svg><div class="t" style="left:1258.30px;top:406px;font:normal 14px/20px 'Liberation Sans',sans-serif;color:#d4d6da;">reit_lizenzen</div><svg style="position:absolute;left:1220px;top:436px;overflow:visible" width="6" height="9" viewBox="0 0 6 9" fill="none"  stroke-width="1" stroke="#9fa2a7"><path d="M0.9 0.6L4.5 4.1L0.9 7.6" stroke-width="1.2"/></svg><svg style="position:absolute;left:1237px;top:434px;overflow:visible" width="14" height="12" viewBox="0 0 14 12" fill="none" stroke="#ced0d6" stroke-width="1" ><rect x="1" y="1" width="12" height="10" fill="#3c3e43" stroke="none"/><rect x="0.5" y="0.5" width="13" height="11" rx="1.5"/><path d="M0.5 3.5H13.5M4.5 0.5V11.5M9.5 0.5V11.5"/></svg><div class="t" style="left:1258.30px;top:430px;font:normal 14px/20px 'Liberation Sans',sans-serif;color:#d4d6da;">reiter</div><svg style="position:absolute;left:1220px;top:460px;overflow:visible" width="6" height="9" viewBox="0 0 6 9" fill="none"  stroke-width="1" stroke="#9fa2a7"><path d="M0.9 0.6L4.5 4.1L0.9 7.6" stroke-width="1.2"/></svg><svg style="position:absolute;left:1237px;top:458px;overflow:visible" width="14" height="12" viewBox="0 0 14 12" fill="none" stroke="#ced0d6" stroke-width="1" ><rect x="1" y="1" width="12" height="10" fill="#3c3e43" stroke="none"/><rect x="0.5" y="0.5" width="13" height="11" rx="1.5"/><path d="M0.5 3.5H13.5M4.5 0.5V11.5M9.5 0.5V11.5"/></svg><div class="t" style="left:1258.30px;top:454px;font:normal 14px/20px 'Liberation Sans',sans-serif;color:#d4d6da;">reiter_lizenzen_zuordnung</div><svg style="position:absolute;left:1220px;top:484px;overflow:visible" width="6" height="9" viewBox="0 0 6 9" fill="none"  stroke-width="1" stroke="#9fa2a7"><path d="M0.9 0.6L4.5 4.1L0.9 7.6" stroke-width="1.2"/></svg><svg style="position:absolute;left:1237px;top:482px;overflow:visible" width="14" height="12" viewBox="0 0 14 12" fill="none" stroke="#ced0d6" stroke-width="1" ><rect x="1" y="1" width="12" height="10" fill="#3c3e43" stroke="none"/><rect x="0.5" y="0.5" width="13" height="11" rx="1.5"/><path d="M0.5 3.5H13.5M4.5 0.5V11.5M9.5 0.5V11.5"/></svg><div class="t" style="left:1258.30px;top:478px;font:normal 14px/20px 'Liberation Sans',sans-serif;color:#d4d6da;">richtverfahren</div><svg style="position:absolute;left:1220px;top:508px;overflow:visible" width="6" height="9" viewBox="0 0 6 9" fill="none"  stroke-width="1" stroke="#9fa2a7"><path d="M0.9 0.6L4.5 4.1L0.9 7.6" stroke-width="1.2"/></svg><svg style="position:absolute;left:1237px;top:506px;overflow:visible" width="14" height="12" viewBox="0 0 14 12" fill="none" stroke="#ced0d6" stroke-width="1" ><rect x="1" y="1" width="12" height="10" fill="#3c3e43" stroke="none"/><rect x="0.5" y="0.5" width="13" height="11" rx="1.5"/><path d="M0.5 3.5H13.5M4.5 0.5V11.5M9.5 0.5V11.5"/></svg><div class="t" style="left:1258.30px;top:502px;font:normal 14px/20px 'Liberation Sans',sans-serif;color:#d4d6da;">startkarten</div><svg style="position:absolute;left:1220px;top:532px;overflow:visible" width="6" height="9" viewBox="0 0 6 9" fill="none"  stroke-width="1" stroke="#9fa2a7"><path d="M0.9 0.6L4.5 4.1L0.9 7.6" stroke-width="1.2"/></svg><svg style="position:absolute;left:1237px;top:530px;overflow:visible" width="14" height="12" viewBox="0 0 14 12" fill="none" stroke="#ced0d6" stroke-width="1" ><rect x="1" y="1" width="12" height="10" fill="#3c3e43" stroke="none"/><rect x="0.5" y="0.5" width="13" height="11" rx="1.5"/><path d="M0.5 3.5H13.5M4.5 0.5V11.5M9.5 0.5V11.5"/></svg><div class="t" style="left:1258.30px;top:526px;font:normal 14px/20px 'Liberation Sans',sans-serif;color:#d4d6da;">turnier_kategorien</div><svg style="position:absolute;left:1220px;top:556px;overflow:visible" width="6" height="9" viewBox="0 0 6 9" fill="none"  stroke-width="1" stroke="#9fa2a7"><path d="M0.9 0.6L4.5 4.1L0.9 7.6" stroke-width="1.2"/></svg><svg style="position:absolute;left:1237px;top:554px;overflow:visible" width="14" height="12" viewBox="0 0 14 12" fill="none" stroke="#ced0d6" stroke-width="1" ><rect x="1" y="1" width="12" height="10" fill="#3c3e43" stroke="none"/><rect x="0.5" y="0.5" width="13" height="11" rx="1.5"/><path d="M0.5 3.5H13.5M4.5 0.5V11.5M9.5 0.5V11.5"/></svg><div class="t" style="left:1258.30px;top:550px;font:normal 14px/20px 'Liberation Sans',sans-serif;color:#d4d6da;">turnier_sparten</div><div style="position:absolute;left:1139px;top:572px;width:320px;height:24px;background:#35363a;border-radius:5px"></div><svg style="position:absolute;left:1220px;top:580px;overflow:visible" width="6" height="9" viewBox="0 0 6 9" fill="none"  stroke-width="1" stroke="#9fa2a7"><path d="M0.9 0.6L4.5 4.1L0.9 7.6" stroke-width="1.2"/></svg><svg style="position:absolute;left:1237px;top:578px;overflow:visible" width="14" height="12" viewBox="0 0 14 12" fill="none" stroke="#ced0d6" stroke-width="1" ><rect x="1" y="1" width="12" height="10" fill="#3c3e43" stroke="none"/><rect x="0.5" y="0.5" width="13" height="11" rx="1.5"/><path d="M0.5 3.5H13.5M4.5 0.5V11.5M9.5 0.5V11.5"/></svg><div class="t" style="left:1258.30px;top:574px;font:normal 14px/20px 'Liberation Sans',sans-serif;color:#d4d6da;letter-spacing:0.111px;">verein</div><svg style="position:absolute;left:1182px;top:604px;overflow:visible" width="6" height="9" viewBox="0 0 6 9" fill="none"  stroke-width="1" stroke="#9fa2a7"><path d="M0.9 0.6L4.5 4.1L0.9 7.6" stroke-width="1.2"/></svg><svg style="position:absolute;left:1199px;top:602px;overflow:visible" width="16" height="15" viewBox="0 0 16 15" fill="none" stroke="#ced0d6" stroke-width="1" ><path d="M1 1H5.5L7 2.5H12V6" /><path d="M5.5 12.5H1.5A1 1 0 0 1 0.5 11.5V1.5A1 1 0 0 1 1.5 0.5H5.5L7 2H12A1 1 0 0 1 13 3V6.5"/><rect x="1" y="3" width="11" height="9" fill="#3c3e43" stroke="none"/><rect x="8" y="7" width="7" height="8" rx="3" fill="#263a63" stroke="#548af7"/><path d="M9 10H14M9 12.5H14" stroke="#548af7"/></svg><div class="t" style="left:1219.40px;top:598px;font:normal 14px/20px 'Liberation Sans',sans-serif;color:#d4d6da;letter-spacing:-0.212px;">Database Objects</div><svg style="position:absolute;left:1182px;top:628px;overflow:visible" width="6" height="9" viewBox="0 0 6 9" fill="none"  stroke-width="1" stroke="#9fa2a7"><path d="M0.9 0.6L4.5 4.1L0.9 7.6" stroke-width="1.2"/></svg><svg style="position:absolute;left:1199px;top:626px;overflow:visible" width="15" height="12" viewBox="0 0 15 12" fill="none" stroke="#ced0d6" stroke-width="1" ><path d="M1.5 0.7H5.5L7.5 2.7H13.5A0.8 0.8 0 0 1 14.3 3.5V10.5A0.8 0.8 0 0 1 13.5 11.3H1.5A0.8 0.8 0 0 1 0.7 10.5V1.5A0.8 0.8 0 0 1 1.5 0.7Z" fill="#2b2633" stroke="#a56fe0" stroke-width="1.3" stroke-linejoin="round"/></svg><div class="t" style="left:1220.40px;top:622px;font:normal 14px/20px 'Liberation Sans',sans-serif;color:#d4d6da;letter-spacing:-0.037px;">virtual views</div><div class="t" style="left:1303.80px;top:626px;font:normal 11px/15px 'Liberation Sans',sans-serif;color:#6f737a;">1</div><svg style="position:absolute;left:1163px;top:652px;overflow:visible" width="6" height="9" viewBox="0 0 6 9" fill="none"  stroke-width="1" stroke="#9fa2a7"><path d="M0.9 0.6L4.5 4.1L0.9 7.6" stroke-width="1.2"/></svg><svg style="position:absolute;left:1180px;top:650px;overflow:visible" width="16" height="15" viewBox="0 0 16 15" fill="none" stroke="#ced0d6" stroke-width="1" ><rect x="1" y="3" width="11" height="9" fill="#3c3e43" stroke="none"/><path d="M5.5 12.5H1.5A1 1 0 0 1 0.5 11.5V1.5A1 1 0 0 1 1.5 0.5H5.5L7 2H12A1 1 0 0 1 13 3V6.5"/><rect x="7.5" y="7.5" width="8" height="3" rx="0.5" fill="#263a63" stroke="#548af7"/><rect x="7.5" y="11.5" width="8" height="3" rx="0.5" fill="#263a63" stroke="#548af7"/></svg><div class="t" style="left:1201.90px;top:646px;font:normal 14px/20px 'Liberation Sans',sans-serif;color:#d4d6da;letter-spacing:-0.160px;">Server Objects</div>
</body></html>
